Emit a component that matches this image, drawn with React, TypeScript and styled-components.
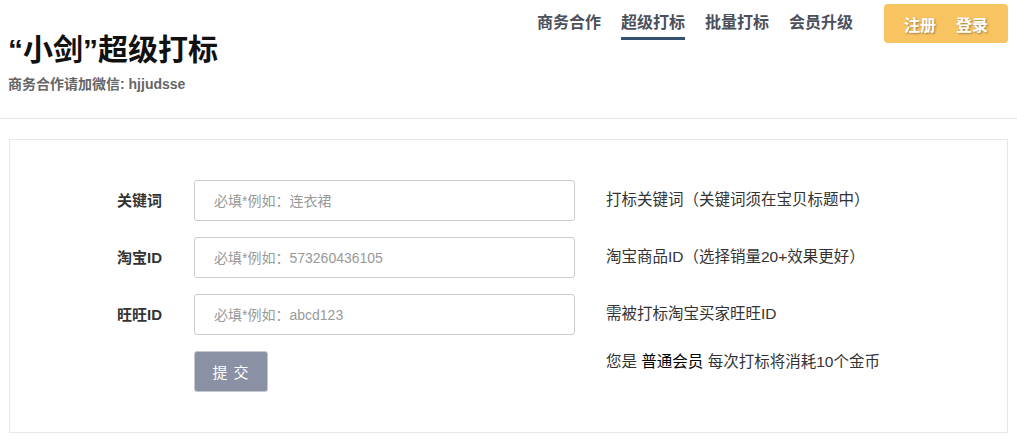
import React from 'react';
import styled, { createGlobalStyle } from 'styled-components';

const GlobalStyle = createGlobalStyle`
	body {
		margin: 0;
		background: #fff;
		font-family: 'Liberation Sans', 'Noto Sans CJK SC', sans-serif;
		color: #333;
	}
`;

const fields = [
	{ label: '关键词', placeholder: '必填*例如：连衣裙', hint: '打标关键词（关键词须在宝贝标题中）' },
	{ label: '淘宝ID', placeholder: '必填*例如：573260436105', hint: '淘宝商品ID（选择销量20+效果更好）' },
	{ label: '旺旺ID', placeholder: '必填*例如：abcd123', hint: '需被打标淘宝买家旺旺ID' },
];

const navItems = [
	{ label: '商务合作', active: false },
	{ label: '超级打标', active: true },
	{ label: '批量打标', active: false },
	{ label: '会员升级', active: false },
];

export default function App() {
	return (
		<>
			<GlobalStyle />
			<StyledHeader>
				<div className='brand'>
					<h1>“小剑”超级打标</h1>
					<p>商务合作请加微信: hjjudsse</p>
				</div>

				<nav className='navWrapper'>
					<ul className='navLinkList'>
						{navItems.map((item) => (
							<NavItem key={item.label} $active={item.active}>
								{item.label}
							</NavItem>
						))}
					</ul>
					<AuthButton>
						<span>注册</span>
						<span>登录</span>
					</AuthButton>
				</nav>
			</StyledHeader>

			<Main>
				<Card>
					<FormGrid>
						{fields.map((f) => (
							<React.Fragment key={f.label}>
								<Label>{f.label}</Label>
								<Input placeholder={f.placeholder} />
								<Hint>{f.hint}</Hint>
							</React.Fragment>
						))}
						<span />
						<SubmitButton>提 交</SubmitButton>
						<Hint $top>
							您是 <strong>普通会员</strong> 每次打标将消耗10个金币
						</Hint>
					</FormGrid>
				</Card>
			</Main>
		</>
	);
}

const StyledHeader = styled.header`
	height: 118px;
	display: flex;
	justify-content: space-between;
	align-items: flex-start;
	padding: 0 9px 0 8px;
	border-bottom: 1px solid #e5e5e5;

	.brand {
		padding-top: 32px;

		h1 {
			margin: 0;
			font-size: 30px;
			line-height: 36px;
			font-weight: 700;
			color: #111;
		}

		p {
			margin: 7px 0 0;
			font-size: 14px;
			line-height: 18px;
			font-weight: 700;
			color: #666;
		}
	}

	.navWrapper {
		display: flex;
		align-items: center;
		margin-top: 4px;
	}

	.navLinkList {
		display: flex;
		align-items: center;
		gap: 20px;
		list-style: none;
		margin: 0 31px 0 0;
		padding: 0;
	}
`;

const NavItem = styled.li<{ $active: boolean }>`
	font-size: 16px;
	line-height: 22px;
	font-weight: 700;
	color: #4b505b;
	padding: 5px 0 3px;
	border-bottom: 3px solid ${(p) => (p.$active ? '#34526e' : 'transparent')};
`;

const AuthButton = styled.div`
	display: flex;
	gap: 20px;
	height: 39px;
	align-items: center;
	padding: 0 20px;
	background: #f8c462;
	border-radius: 4px;

	span {
		font-size: 16px;
		font-weight: 700;
		color: #fff;
		text-shadow: 1px 1px 2px rgba(0, 0, 0, 0.35);
	}
`;

const Main = styled.main`
	padding: 20px 9px 8px;
`;

const Card = styled.section`
	border: 1px solid #e8e8e8;
	padding: 40px 0 40px 107px;
`;

const FormGrid = styled.div`
	display: grid;
	grid-template-columns: 46px 381px auto;
	column-gap: 31px;
	row-gap: 16px;
	align-items: center;
`;

const Label = styled.label`
	font-size: 15px;
	font-weight: 700;
	color: #333;
	white-space: nowrap;
	margin-top: -3px;
`;

const Input = styled.input`
	box-sizing: border-box;
	height: 41px;
	width: 100%;
	border: 1px solid #ccc;
	border-radius: 3px;
	padding: 0 19px;
	font-size: 14px;
	font-family: 'Liberation Sans', 'Noto Sans CJK SC', sans-serif;
	color: #333;
	outline: none;

	&::placeholder {
		color: #999;
	}
`;

const Hint = styled.div<{ $top?: boolean }>`
	font-size: 15.5px;
	line-height: 20px;
	color: #333;
	align-self: ${(p) => (p.$top ? 'start' : 'center')};
	margin-top: ${(p) => (p.$top ? '1px' : '-2px')};

	strong {
		font-weight: 400;
		color: #000;
	}
`;

const SubmitButton = styled.button`
	box-sizing: border-box;
	width: 74px;
	height: 41px;
	background: #8b91a4;
	border: 1px solid #c4c7d0;
	border-radius: 3px;
	color: #fff;
	font-size: 15px;
	font-family: 'Liberation Sans', 'Noto Sans CJK SC', sans-serif;
	letter-spacing: 1px;
`;
